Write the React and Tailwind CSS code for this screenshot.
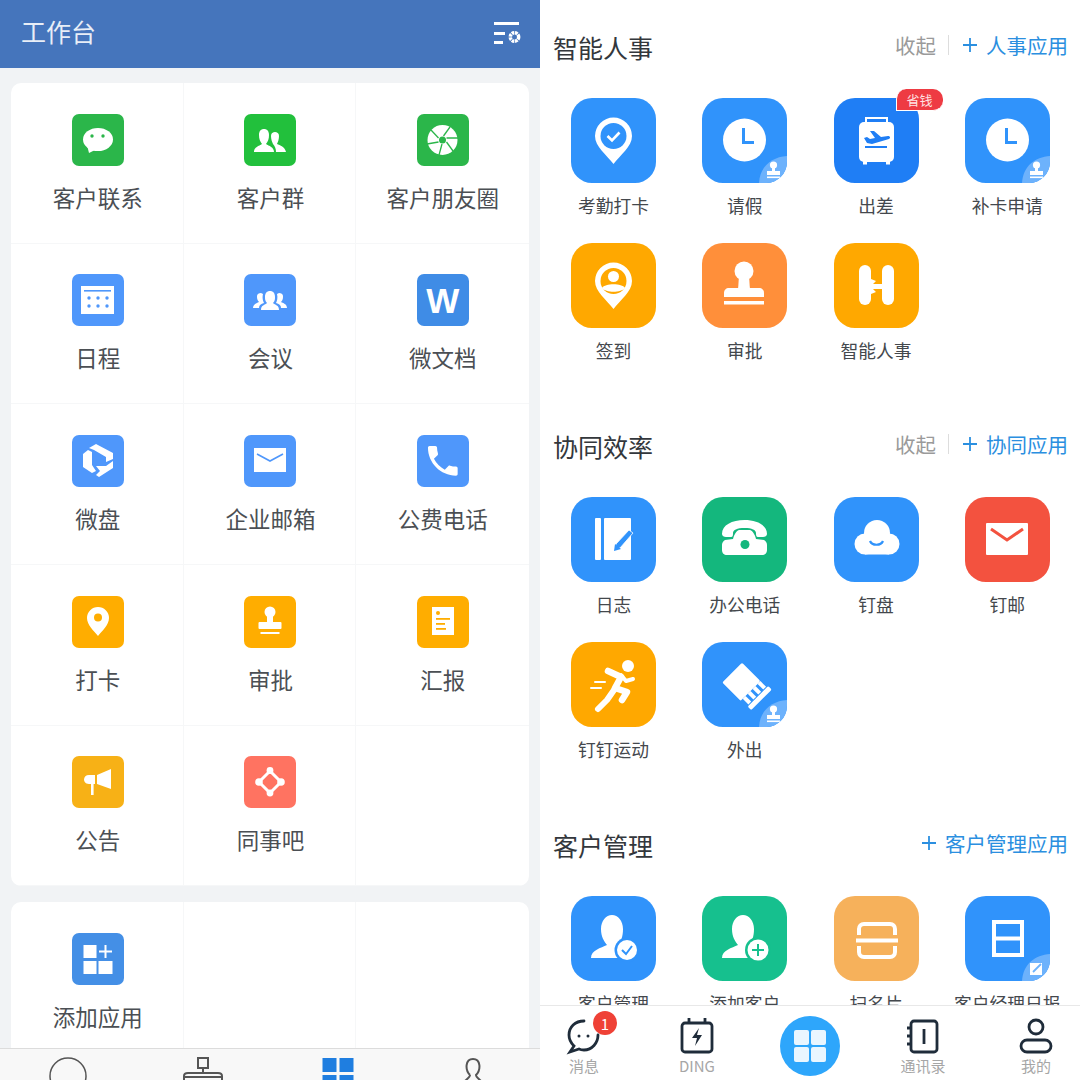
const BLUE = "#3093fb";

function Glyph({ size, children }) {
  return (
    <svg viewBox={`0 0 ${size} ${size}`} className="absolute inset-0 h-full w-full">
      {children}
    </svg>
  );
}

/* ---------- small tiles on the left screen, drawn on a 52 grid ---------- */
const smallIcons = {
  chat: (
    <>
      <ellipse cx="26" cy="25.5" rx="15" ry="11.5" fill="#fff" />
      <path d="M15 31 L17 39 L25 35 Z" fill="#fff" />
      <circle cx="20" cy="22" r="1.7" fill="#2bb64a" />
      <circle cx="31" cy="22" r="1.7" fill="#2bb64a" />
    </>
  ),
  group: (
    <>
      <path d="M10 38 C10 33 15 32 18 30 C16 27 15 25 15 21 C15 17 17 15 20 15 C23 15 25 17 25 21 C25 25 24 27 22 30 C25 32 30 33 30 38 Z" fill="#fff" />
      <path d="M29 30 C28 28 27 25 27 22 C27 19 29 18 31 18 C33 18 35 19 35 22 C35 25 34 28 33 30 C36 31 41 33 42 38 L32 38 C32 35 31 32 29 30 Z" fill="#fff" />
    </>
  ),
  shutter: (
    <>
      <circle cx="25.5" cy="26" r="15" fill="#fff" />
      <g stroke="#2bb64a" strokeWidth="1.3">
        <path d="M33 13 L26.5 22" />
        <path d="M41 24 L29.5 24" />
        <path d="M36 37 L29.5 28" />
        <path d="M22 41 L25 30" />
        <path d="M10 30 L21.5 28" />
        <path d="M14 16 L21.5 24" />
      </g>
      <circle cx="25.5" cy="26" r="3.5" fill="#2bb64a" />
    </>
  ),
  calendar: (
    <>
      <rect x="9" y="12" width="33" height="28" fill="#fff" />
      <rect x="12" y="16" width="27" height="1.6" fill="#4f97fb" />
      {[17, 26, 35].map((x) =>
        [24, 32].map((y) => <circle key={`${x}${y}`} cx={x} cy={y} r="1.7" fill="#4f97fb" />)
      )}
    </>
  ),
  meeting: (
    <>
      <path d="M17 36 C17 31 21 31 23 29 C21 27 21 25 21 23 C21 19 23 17 26 17 C29 17 31 19 31 23 C31 25 31 27 29 29 C31 31 35 31 35 36 Z" fill="#fff" />
      <path d="M9 34 C9 30 13 29 15 28 C13 26 13 24 13 22 C13 20 15 19 17 19 L19 20 C18 24 19 27 20 29 C17 30 15 31 15 34 Z" fill="#fff" />
      <path d="M43 34 C43 30 39 29 37 28 C39 26 39 24 39 22 C39 20 37 19 35 19 L33 20 C34 24 33 27 32 29 C35 30 37 31 37 34 Z" fill="#fff" />
    </>
  ),
  drive: (
    <g fill="#fff">
      <path d="M24 9 L41 18 L41 24 L34 27 L34 22 L22 15 L17 13 Z" />
      <path d="M11 19 L16 15 L20 17 L20 30 L24 36 L20 38 L11 32 Z" />
      <path d="M24 31 L34 31 L41 26 L41 33 L27 42 L24 40 L28 36 Z" />
    </g>
  ),
  mail: (
    <>
      <rect x="10" y="13" width="32" height="24" fill="#fff" />
      <path d="M13 19 L26 26 L39 19" fill="none" stroke="#4f97fb" strokeWidth="1.6" />
    </>
  ),
  phone: (
    <path
      transform="translate(6 6) scale(1.65)"
      d="M6.62 10.79c1.44 2.83 3.76 5.14 6.59 6.59l2.2-2.2c.27-.27.67-.36 1.02-.24 1.12.37 2.33.57 3.57.57.55 0 1 .45 1 1V20c0 .55-.45 1-1 1-9.39 0-17-7.61-17-17 0-.55.45-1 1-1h3.5c.55 0 1 .45 1 1 0 1.25.2 2.45.57 3.57.11.35.03.74-.25 1.02l-2.2 2.2z"
      fill="#fff"
    />
  ),
  pin: (
    <>
      <path d="M15 22 a11 11 0 0 1 22 0 c0 7 -7 13 -11 18 c-4 -5 -11 -11 -11 -18z" fill="#fff" />
      <circle cx="26" cy="21.5" r="4" fill="#ffad00" />
    </>
  ),
  stamp: (
    <g fill="#fff">
      <circle cx="26" cy="16" r="5.5" />
      <rect x="23" y="18" width="6" height="9" />
      <rect x="14.5" y="26" width="23" height="7" rx="1" />
      <rect x="16.5" y="36" width="19" height="2" />
    </g>
  ),
  report: (
    <>
      <rect x="15" y="11" width="22" height="28" fill="#fff" />
      <circle cx="21" cy="17" r="2" fill="#ffad00" />
      <rect x="19" y="22" width="14" height="1.8" fill="#ffad00" />
      <rect x="19" y="27" width="9" height="1.8" fill="#ffad00" />
      <rect x="19" y="32" width="10" height="1.8" fill="#ffad00" />
    </>
  ),
  horn: (
    <g fill="#fff">
      <path d="M25 19 L39 13 L39 33 L25 28 Z" />
      <path d="M23 19 L23 28 L17 28 C13 28 12 25 12 23.5 C12 21 14 19 17 19 Z" />
      <rect x="19" y="28" width="2.6" height="11" />
    </g>
  ),
  nodes: (
    <>
      <path d="M26 15 L37 26 L26 37 L15 26 Z" fill="none" stroke="#fff" strokeWidth="3" strokeLinejoin="round" />
      <circle cx="26" cy="14.5" r="3.4" fill="#fff" />
      <circle cx="37" cy="26" r="3.8" fill="#fff" />
      <circle cx="15" cy="26" r="3.8" fill="#fff" />
      <circle cx="26" cy="37" r="3.4" fill="#fff" />
    </>
  ),
  add: (
    <g fill="#fff">
      <rect x="11.5" y="12" width="13" height="13" />
      <rect x="11.5" y="28" width="13" height="13" />
      <rect x="26.5" y="28" width="14" height="13" />
      <rect x="27" y="17.5" width="13" height="2" />
      <rect x="32.5" y="12" width="2" height="13" />
    </g>
  ),
};

/* ---------- big tiles on the right screen, drawn on an 85 grid ---------- */
function StampCorner() {
  return (
    <>
      <path d="M85 58 C70 59 58 68 57 85 L85 85 Z" fill="#6db2fc" />
      <g fill="#fff">
        <circle cx="71.5" cy="67" r="3.6" />
        <rect x="70" y="68" width="3" height="5" />
        <rect x="65" y="73" width="13" height="4" />
        <rect x="65" y="78.5" width="13" height="1.6" />
      </g>
    </>
  );
}

function Clock() {
  return (
    <>
      <circle cx="42.5" cy="42" r="21.5" fill="#fff" />
      <path d="M41.5 30 V44.5 H52" fill="none" stroke={BLUE} strokeWidth="3" />
    </>
  );
}

function Person() {
  return (
    <path
      d="M20 62 C20 54 30 52 36 49 C33 45 30 41 30 33 C30 25 35 19 41 19 C47 19 52 25 52 33 C52 41 50 45 47 49 C50 51 54 52 56 54 L50 62 Z"
      fill="#fff"
    />
  );
}

const bigIcons = {
  checkin: (
    <>
      <path d="M24 38 a18.5 18.5 0 0 1 37 0 c0 11 -12 19 -18.5 28 c-6.5 -9 -18.5 -17 -18.5 -28z" fill="#fff" />
      <circle cx="42.5" cy="38" r="13" fill={BLUE} />
      <path d="M36.5 38 L41 42.5 L48.5 34.5" fill="none" stroke="#fff" strokeWidth="2.6" />
    </>
  ),
  leave: (
    <>
      <Clock />
      <StampCorner />
    </>
  ),
  trip: (
    <>
      <path d="M32 24 V20 H53 V24" fill="none" stroke="#fff" strokeWidth="2" />
      <rect x="25" y="24" width="35" height="40" rx="5" fill="#fff" />
      <rect x="29" y="63" width="4" height="3.5" fill="#fff" />
      <rect x="52" y="63" width="4" height="3.5" fill="#fff" />
      <path d="M30 40 L33 39 L36 41 L41 40 L36 33 L40 33 L47 39 L54 38 C56 38 57 40 55 41 L38 46 L33 45 Z" fill="#1f7ef5" />
      <rect x="31" y="48" width="22" height="2" fill="#1f7ef5" />
    </>
  ),
  signin: (
    <>
      <path d="M24 38 a18.5 18.5 0 0 1 37 0 c0 11 -12 19 -18.5 28 c-6.5 -9 -18.5 -17 -18.5 -28z" fill="#fff" />
      <circle cx="42.5" cy="38" r="13" fill="#ffa800" />
      <circle cx="42.5" cy="33.5" r="5.5" fill="#fff" />
      <path d="M31 45 C34 40 51 40 54 45 C50 50 35 50 31 45 Z" fill="#fff" />
    </>
  ),
  stamp: (
    <g fill="#fff">
      <circle cx="42" cy="28" r="9.5" />
      <path d="M37 33 H47 L48 47 H36 Z" />
      <path d="M22 50 C22 47 24 45 27 45 H57 C60 45 62 47 62 50 V54 H22 Z" />
      <rect x="22" y="58" width="40" height="3.5" />
    </g>
  ),
  hr: (
    <g fill="#fff">
      <rect x="25" y="22" width="12" height="40" rx="6" />
      <rect x="48" y="22" width="12" height="40" rx="6" />
      <path d="M37 36 L42 38 L39 41 L48 41 L48 46 L39 46 L42 49 L37 51 Z" />
    </g>
  ),
  log: (
    <>
      <rect x="24" y="21" width="6" height="42" rx="1" fill="#fff" />
      <rect x="33" y="21" width="27" height="42" rx="1" fill="#fff" />
      <path d="M45 47 L58 33 L62 36 L49 51 L44 52 Z" fill={BLUE} stroke="#fff" strokeWidth="0.8" />
      <path d="M44 47 L43 54 L50 52 Z" fill={BLUE} />
    </>
  ),
  deskphone: (
    <>
      <path d="M20 37 C20 28 30 23 42.5 23 C55 23 65 28 65 37 C65 39 63 40 61 40 L56 40 C54 40 54 38 54 36 C54 33 50 31 42.5 31 C35 31 31 33 31 36 C31 38 31 40 29 40 L24 40 C22 40 20 39 20 37 Z" fill="#fff" />
      <path d="M31 42 C32 38 34 34 37 33 H48 C51 34 53 38 54 42 L62 43 C64 44 65 46 65 48 V53 C65 56 63 58 60 58 H25 C22 58 20 56 20 53 V48 C20 46 21 44 23 43 Z" fill="#fff" />
      <circle cx="43" cy="47.5" r="4.5" fill="#14b77d" />
    </>
  ),
  cloud: (
    <>
      <g fill="#fff">
        <circle cx="43" cy="36" r="13" />
        <circle cx="31" cy="47" r="10.5" />
        <circle cx="55" cy="47" r="10.5" />
        <rect x="31" y="40" width="24" height="17.5" />
      </g>
      <path d="M36 44 C38 49 47 49 49 44" fill="none" stroke={BLUE} strokeWidth="2.2" />
    </>
  ),
  redmail: (
    <>
      <rect x="21" y="26" width="42" height="32" rx="1" fill="#fff" />
      <path d="M26 32 L42 43 L58 32" fill="none" stroke="#f3523f" strokeWidth="3" />
    </>
  ),
  run: (
    <>
      <circle cx="57" cy="24" r="6" fill="#fff" />
      <g fill="none" stroke="#fff" strokeLinecap="round" strokeLinejoin="round">
        <path d="M37 29 L50 35 L44 46 L56 50 L51 58" strokeWidth="6.5" />
        <path d="M43 48 L36 58 L27 67" strokeWidth="6" />
        <path d="M50 33 L55 39 L62 37" strokeWidth="4" />
        <path d="M24 40 H34" strokeWidth="2" />
        <path d="M20 46 H30" strokeWidth="2" />
      </g>
    </>
  ),
  out: (
    <>
      <g transform="rotate(45 42.5 43)">
        <rect x="25" y="29" width="26" height="28" rx="1.5" fill="#fff" />
        <rect x="51" y="29" width="8" height="4" fill="#fff" />
        <rect x="51" y="36" width="8" height="4" fill="#fff" />
        <rect x="51" y="43" width="8" height="4" fill="#fff" />
        <rect x="51" y="50" width="8" height="4" fill="#fff" />
        <rect x="60" y="27" width="5" height="29" rx="1.5" fill="#fff" />
      </g>
      <StampCorner />
    </>
  ),
  client: (
    <>
      <Person />
      <circle cx="56" cy="54" r="12.5" fill={BLUE} />
      <circle cx="56" cy="54" r="10" fill="#fff" />
      <path d="M51 54 L55 58 L61 50" fill="none" stroke={BLUE} strokeWidth="2" />
    </>
  ),
  addclient: (
    <>
      <Person />
      <circle cx="56" cy="54" r="13" fill="#16c08e" />
      <circle cx="56" cy="54" r="10.5" fill="#fff" />
      <path d="M56 48 V60 M50 54 H62" stroke="#16c08e" strokeWidth="2" />
    </>
  ),
  scan: (
    <g fill="none" stroke="#fff" strokeWidth="4">
      <path d="M25 39 V33 C25 30 27 28 30 28 H56 C59 28 61 30 61 33 V39" />
      <path d="M25 50 V56 C25 59 27 61 30 61 H56 C59 61 61 59 61 56 V50" />
      <path d="M22 44.5 H64" />
    </g>
  ),
  form: (
    <>
      <rect x="29" y="26" width="28" height="33" fill="none" stroke="#fff" strokeWidth="4" />
      <rect x="29" y="40.5" width="28" height="4" fill="#fff" />
      <path d="M85 58 C70 59 58 68 57 85 L85 85 Z" fill="#6db2fc" />
      <rect x="65" y="67" width="12" height="12" fill="#fff" />
      <path d="M68 76 L76 68" stroke="#6db2fc" strokeWidth="1.8" />
    </>
  ),
};

const workbench = [
  { label: "客户联系", icon: "chat", color: "bg-[#2bb64a]" },
  { label: "客户群", icon: "group", color: "bg-[#22c03c]" },
  { label: "客户朋友圈", icon: "shutter", color: "bg-[#2bb64a]" },
  { label: "日程", icon: "calendar", color: "bg-[#4f97fb]" },
  { label: "会议", icon: "meeting", color: "bg-[#4f97fb]" },
  { label: "微文档", word: "W", color: "bg-[#3f8ce6]" },
  { label: "微盘", icon: "drive", color: "bg-[#4f97fb]" },
  { label: "企业邮箱", icon: "mail", color: "bg-[#4f97fb]" },
  { label: "公费电话", icon: "phone", color: "bg-[#4f97fb]" },
  { label: "打卡", icon: "pin", color: "bg-[#ffad00]" },
  { label: "审批", icon: "stamp", color: "bg-[#ffad00]" },
  { label: "汇报", icon: "report", color: "bg-[#ffad00]" },
  { label: "公告", icon: "horn", color: "bg-[#f7b116]" },
  { label: "同事吧", icon: "nodes", color: "bg-[#ff7361]" },
  { label: "" },
];

const sections = [
  {
    title: "智能人事",
    action: "人事应用",
    collapse: true,
    apps: [
      { label: "考勤打卡", icon: "checkin", color: "bg-[#3093fb]" },
      { label: "请假", icon: "leave", color: "bg-[#3093fb]" },
      { label: "出差", icon: "trip", color: "bg-[#1f7ef5]", tag: "省钱" },
      { label: "补卡申请", icon: "leave", color: "bg-[#3093fb]" },
      { label: "签到", icon: "signin", color: "bg-[#ffa800]" },
      { label: "审批", icon: "stamp", color: "bg-[#ff8f3a]" },
      { label: "智能人事", icon: "hr", color: "bg-[#ffa800]" },
    ],
  },
  {
    title: "协同效率",
    action: "协同应用",
    collapse: true,
    apps: [
      { label: "日志", icon: "log", color: "bg-[#3093fb]" },
      { label: "办公电话", icon: "deskphone", color: "bg-[#14b77d]" },
      { label: "钉盘", icon: "cloud", color: "bg-[#3093fb]" },
      { label: "钉邮", icon: "redmail", color: "bg-[#f3523f]" },
      { label: "钉钉运动", icon: "run", color: "bg-[#ffa800]" },
      { label: "外出", icon: "out", color: "bg-[#3093fb]" },
    ],
  },
  {
    title: "客户管理",
    action: "客户管理应用",
    collapse: false,
    apps: [
      { label: "客户管理", icon: "client", color: "bg-[#3093fb]" },
      { label: "添加客户", icon: "addclient", color: "bg-[#16c08e]" },
      { label: "扫名片", icon: "scan", color: "bg-[#f6b15b]" },
      { label: "客户经理日报", icon: "form", color: "bg-[#3093fb]" },
    ],
  },
];

function WorkCell({ app }) {
  return (
    <div className="flex h-[160.7px] flex-col items-center border-r border-b border-[#f6f7f8] pt-[30.5px] pl-[2px] nth-[3n]:border-r-0 nth-[3n]:pl-0">
      {app.label && (
        <>
          <div className={`relative flex h-[52px] w-[52px] items-center justify-center rounded-[7px] ${app.color}`}>
            {app.word ? (
              <span className="font-['Liberation_Sans',sans-serif] text-[35px] leading-none font-bold text-white">{app.word}</span>
            ) : (
              <Glyph size={52}>{smallIcons[app.icon]}</Glyph>
            )}
          </div>
          <div className="mt-[16px] text-[22.5px] leading-[30px] text-[#4b4f54]">{app.label}</div>
        </>
      )}
    </div>
  );
}

function LeftNav() {
  return (
    <div className="grid h-[32px] shrink-0 grid-cols-4 justify-items-center overflow-hidden border-t border-[#dcdcdc] bg-[#f8f8f8] pt-[7px]">
      <svg width="40" height="40" viewBox="0 0 40 40">
        <circle cx="20" cy="20" r="18" fill="none" stroke="#555" strokeWidth="1.5" />
      </svg>
      <svg width="42" height="40" viewBox="0 0 42 40">
        <rect x="16" y="2" width="10" height="10" fill="none" stroke="#555" strokeWidth="2" />
        <path d="M21 12 V17 M2 24 V20 C2 18 4 17 6 17 H36 C38 17 40 18 40 20 V24 M1 21 H41" fill="none" stroke="#555" strokeWidth="2" />
      </svg>
      <svg width="32" height="40" viewBox="0 0 32 40">
        <rect x="0.5" y="2" width="14" height="14" fill="#1f7ee0" />
        <rect x="17.5" y="2" width="14" height="14" fill="#1f7ee0" />
        <rect x="0.5" y="19" width="14" height="14" fill="#1f7ee0" />
        <rect x="17.5" y="19" width="14" height="14" fill="#1f7ee0" />
      </svg>
      <svg width="20" height="40" viewBox="0 0 20 40">
        <path d="M7 19 C2 14 2 3 10 3 C18 3 18 14 13 19 C13 21 16 23 18 25 M7 19 C7 21 4 23 2 25" fill="none" stroke="#555" strokeWidth="2" />
      </svg>
    </div>
  );
}

function LeftScreen() {
  return (
    <div className="flex h-full w-[540px] shrink-0 flex-col bg-[#f1f3f5]">
      <header className="flex h-[68px] shrink-0 items-center justify-between bg-[#4575bc] pr-[17px] pl-[21px]">
        <h1 className="mb-[6px] text-[25px] leading-none font-normal text-[#e8eef7]">工作台</h1>
        <svg width="30" height="28" viewBox="0 0 30 28">
          <g fill="#fff">
            <rect x="1" y="2" width="25" height="3" />
            <rect x="1" y="12" width="11" height="3" />
            <rect x="1" y="21" width="9" height="3" />
          </g>
          <circle cx="21.5" cy="17" r="4.2" fill="none" stroke="#fff" strokeWidth="3.5" strokeDasharray="2.6 0.7" />
        </svg>
      </header>
      <main className="flex min-h-0 flex-1 flex-col gap-[16px] overflow-hidden px-[11px] pt-[15px]">
        <div className="grid shrink-0 grid-cols-3 overflow-hidden rounded-[10px] bg-white">
          {workbench.map((app, i) => (
            <WorkCell key={i} app={app} />
          ))}
        </div>
        <div className="grid shrink-0 grid-cols-3 overflow-hidden rounded-[10px] bg-white">
          <WorkCell app={{ label: "添加应用", icon: "add", color: "bg-[#448fe6]" }} />
          <WorkCell app={{ label: "" }} />
          <WorkCell app={{ label: "" }} />
        </div>
      </main>
      <LeftNav />
    </div>
  );
}

function AppTile({ app }) {
  return (
    <div className="flex flex-col items-center">
      <div className="relative h-[85px] w-[85px]">
        <div className={`relative h-full w-full overflow-hidden rounded-[21px] ${app.color}`}>
          <Glyph size={85}>{bigIcons[app.icon]}</Glyph>
        </div>
        {app.tag && (
          <span className="absolute top-[-9px] right-[-24px] flex h-[22px] w-[47px] items-center justify-center rounded-tl-[10px] rounded-r-[10px] border-b border-l border-white bg-[#ee3b43] text-[13px] leading-none text-[#ffe3e3]">
            {app.tag}
          </span>
        )}
      </div>
      <div className="mt-[10px] text-[17.75px] leading-[24px] text-[#44484d]">{app.label}</div>
    </div>
  );
}

function Section({ section }) {
  return (
    <section className="mb-[67.5px]">
      <div className="flex h-[36px] items-center justify-between pr-[12px] pl-[13px]">
        <h2 className="-translate-y-[1px] text-[25px] leading-none font-normal text-[#33373c]">{section.title}</h2>
        <div className="flex -translate-y-[3px] items-center text-[20.5px] leading-none">
          {section.collapse && (
            <>
              <span className="text-[#9a9a9a]">收起</span>
              <span className="mr-[14px] ml-[12px] h-[20px] w-px bg-[#dddddd]" />
            </>
          )}
          <svg width="14" height="14" viewBox="0 0 14 14" className="mr-[9px]">
            <path d="M7 0 V14 M0 7 H14" stroke="#2b8fe0" strokeWidth="1.8" />
          </svg>
          <span className="text-[#2b8fe0]">{section.action}</span>
        </div>
      </div>
      <div className="mt-[32px] grid grid-cols-4 gap-y-[25.5px] pr-[7px] pl-[8px]">
        {section.apps.map((app) => (
          <AppTile key={app.label} app={app} />
        ))}
      </div>
    </section>
  );
}

function NavItem({ label, badge, children }) {
  return (
    <div className="relative flex w-[64px] flex-col items-center pt-[10px]">
      <svg width="40" height="40" viewBox="0 0 40 40" fill="none" stroke="#1f2c3a" strokeWidth="2.8">
        {children}
      </svg>
      {badge && (
        <span className="absolute top-[5px] left-[41px] flex h-[24px] w-[24px] items-center justify-center rounded-full bg-[#ef4136] text-[15px] leading-none text-white">
          {badge}
        </span>
      )}
      <span className="text-[15px] leading-[20px] text-[#a6a6a6]">{label}</span>
    </div>
  );
}

function RightNav() {
  return (
    <nav className="flex h-[75px] shrink-0 justify-between border-t border-[#e8e8e8] bg-white px-[12px]">
      <NavItem label="消息" badge="1">
        <path d="M20 5 C11 5 5 11 5 19 C5 24 7 27 10 30 L6 36 L15 33 C17 34 18 34 20 34 C28 34 34 27 34 19" strokeLinecap="round" />
        <circle cx="15" cy="20" r="1.5" fill="#1f2c3a" stroke="none" />
        <circle cx="24" cy="20" r="1.5" fill="#1f2c3a" stroke="none" />
      </NavItem>
      <NavItem label="DING">
        <rect x="5" y="7" width="30" height="29" rx="3" />
        <path d="M12 2 V7 M28 2 V7" />
        <path d="M22 12 L15 22 H20 L18 30 L25 19 H20 Z" fill="#1f2c3a" stroke="none" />
      </NavItem>
      <div className="flex w-[64px] justify-center pt-[10px]">
        <div className="grid h-[60px] w-[60px] grid-cols-2 content-center justify-center gap-[2px] rounded-full bg-[#2ea6fb] px-[14px]">
          <span className="h-[15px] rounded-[2px] bg-white/90" />
          <span className="h-[15px] rounded-[2px] bg-white/90" />
          <span className="h-[15px] rounded-[2px] bg-white/90" />
          <span className="h-[15px] rounded-[2px] bg-white/90" />
        </div>
      </div>
      <NavItem label="通讯录">
        <rect x="8" y="5" width="26" height="31" rx="3" />
        <path d="M21 13 V28" />
        <path d="M4 12 H8 M4 20 H8 M4 28 H8" />
      </NavItem>
      <NavItem label="我的">
        <circle cx="20" cy="11" r="7" />
        <rect x="5" y="24" width="30" height="12" rx="6" />
      </NavItem>
    </nav>
  );
}

function RightScreen() {
  return (
    <div className="flex h-full w-[540px] shrink-0 flex-col bg-white">
      <div className="min-h-0 flex-1 overflow-hidden pt-[30px]">
        {sections.map((section) => (
          <Section key={section.title} section={section} />
        ))}
      </div>
      <RightNav />
    </div>
  );
}

export default function App() {
  return (
    <div className="flex h-[1080px] w-[1080px] overflow-hidden font-['Noto_Sans_CJK_SC','Noto_Sans',sans-serif]">
      <LeftScreen />
      <RightScreen />
    </div>
  );
}
